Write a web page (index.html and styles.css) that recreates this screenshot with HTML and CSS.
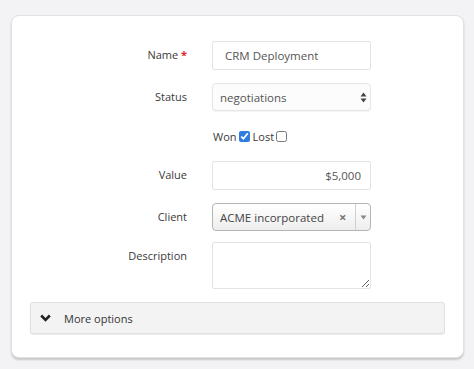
FILE: index.html
```html
<!DOCTYPE html>
<html lang="en">
<head>
    <meta charset="UTF-8">
    <title>Deal form</title>
    <link rel="stylesheet" href="styles.css">
</head>
<body>
    <div class="card">
        <form class="deal-form">
            <label class="label">Name <span class="req">*</span></label>
            <input class="field" type="text" value="CRM Deployment">

            <label class="label">Status</label>
            <div class="select-wrap">
                <select class="field select">
                    <option>negotiations</option>
                </select>
                <svg class="updown" width="7" height="11" viewBox="0 0 7 11">
                    <path d="M3.5 0.5 L6.5 4.5 L0.5 4.5 Z" fill="#444"/>
                    <path d="M3.5 10.5 L6.5 6.5 L0.5 6.5 Z" fill="#444"/>
                </svg>
            </div>

            <span></span>
            <div class="checks">
                <span>Won</span><input type="checkbox" checked>
                <span>Lost</span><input type="checkbox">
            </div>

            <label class="label">Value</label>
            <input class="field num" type="text" value="$5,000">

            <label class="label">Client</label>
            <div class="combo">
                <span class="combo-text">ACME incorporated</span>
                <span class="combo-clear">&times;</span>
                <span class="combo-arrow">
                    <svg width="7" height="5" viewBox="0 0 7 5"><path d="M0.5 0.5 L6.5 0.5 L3.5 4.5 Z" fill="#888"/></svg>
                </span>
            </div>

            <label class="label">Description</label>
            <textarea class="field area"></textarea>
        </form>

        <div class="more">
            <svg width="11" height="8" viewBox="0 0 11 8">
                <path d="M1.2 1.5 L5.5 5.8 L9.8 1.5" fill="none" stroke="#222" stroke-width="2.6"/>
            </svg>
            <span>More options</span>
        </div>
    </div>
</body>
</html>
```
FILE: styles.css
```css
body {
    margin: 0;
    background-color: #f3f3f5;
    font-family: 'Open Sans', sans-serif;
    font-size: 11px;
    color: #333;
}

.card {
    margin: 15px 12px 12px 11px;
    padding: 25px 18px 23px 18px;
    background-color: #fff;
    border: 1px solid #e2e2e4;
    border-radius: 8px;
    box-shadow: 0 2px 2px rgba(0, 0, 0, 0.18);
    width: 415px;
}

.deal-form {
    display: grid;
    grid-template-columns: 157px 159px;
    grid-template-rows: 29px 28px 24px 29px 26px 47px;
    column-gap: 25px;
    row-gap: 13px;
    align-items: start;
    margin-bottom: 13px;
}

.label {
    text-align: right;
    line-height: 28px;
    color: #3a3a3a;
}

.req {
    color: #e0262b;
    font-weight: bold;
}

.field {
    box-sizing: border-box;
    width: 159px;
    height: 29px;
    margin: 0;
    padding: 0 9px 0 12px;
    border: 1px solid #e3e3e3;
    border-radius: 2px;
    font-family: 'Open Sans', sans-serif;
    font-size: 11.5px;
    color: #555;
    background-color: #fff;
    outline: none;
}

.select-wrap {
    position: relative;
}

.select {
    appearance: none;
    -webkit-appearance: none;
    height: 28px;
    padding: 0 7px;
    border-radius: 4px;
    border-color: #e6e6e6;
    background-color: #fcfcfc;
    box-shadow: 0 1px 1px rgba(0, 0, 0, 0.05);
}

.updown {
    position: absolute;
    right: 4px;
    top: 9px;
}

.checks {
    display: flex;
    align-items: center;
    height: 24px;
    padding-left: 1px;
    color: #3a3a3a;
}

.checks input {
    width: 11px;
    height: 11px;
    margin: 1px 3px 0 2px;
    accent-color: #2f7de0;
}

.num {
    text-align: right;
}

.combo {
    box-sizing: border-box;
    width: 159px;
    height: 28px;
    display: flex;
    align-items: center;
    border: 1px solid #b4b4b4;
    border-radius: 4px;
    background: linear-gradient(#fff, #eeeeee);
    color: #444;
    white-space: nowrap;
    font-size: 11.5px;
}

.combo-text {
    flex: 1;
    padding-left: 7px;
}

.combo-clear {
    width: 14px;
    font-size: 13px;
    font-weight: bold;
    color: #777;
    margin-right: 2px;
}

.combo-arrow {
    width: 14px;
    height: 100%;
    display: flex;
    align-items: center;
    justify-content: center;
    border-left: 1px solid #d0d0d0;
}

.area {
    height: 47px;
    padding: 4px 8px;
    resize: vertical;
}

.more {
    display: flex;
    align-items: center;
    gap: 13px;
    height: 30px;
    padding-left: 9px;
    background-color: #f3f3f3;
    border: 1px solid #e0e0e0;
    border-radius: 3px;
    box-shadow: 0 1px 1px rgba(0, 0, 0, 0.08);
    color: #333;
}
```
